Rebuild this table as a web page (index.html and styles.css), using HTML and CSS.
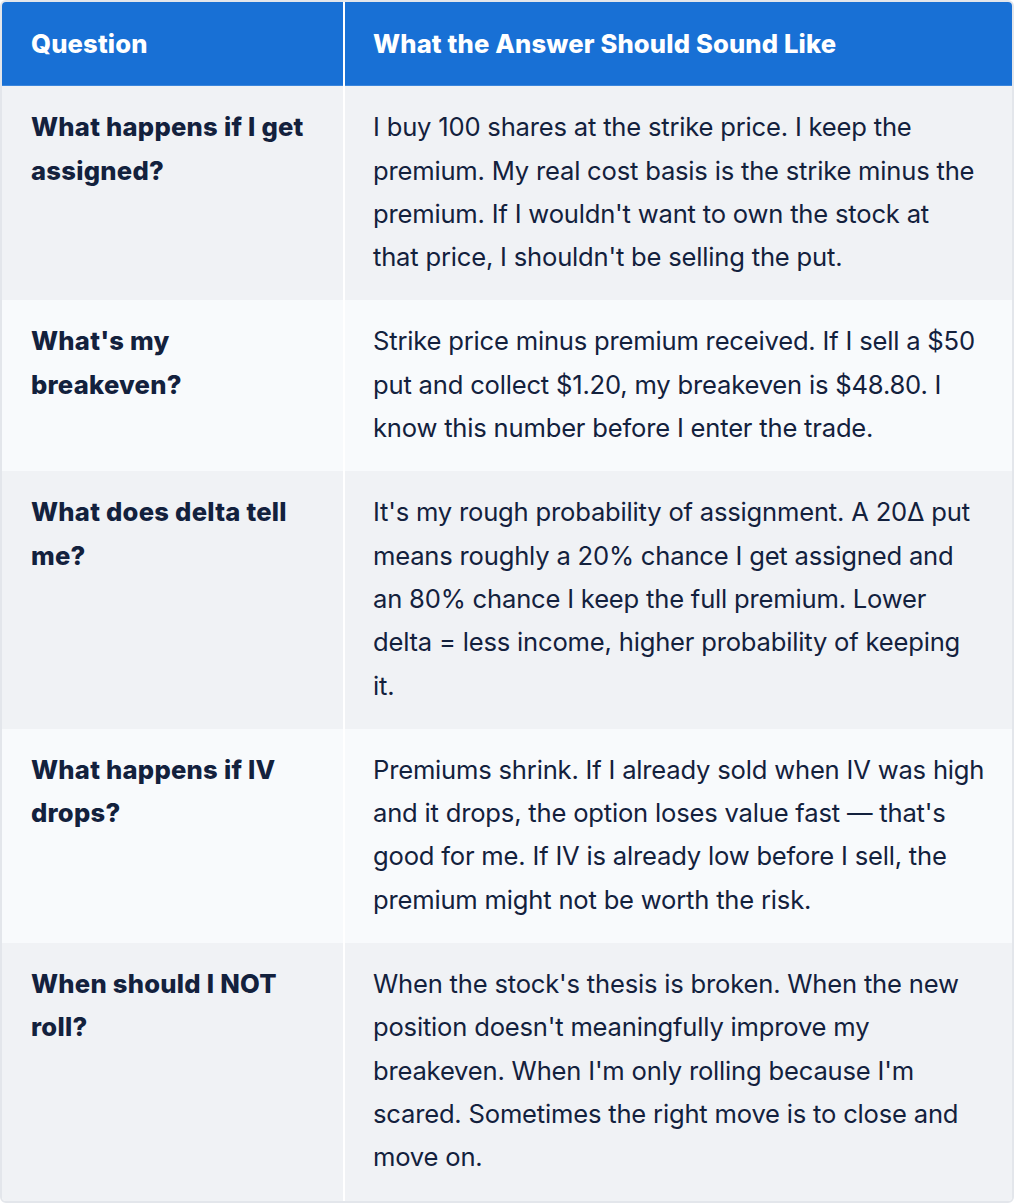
FILE: index.html
```html
<!DOCTYPE html>
<html lang="en">
<head>
<meta charset="utf-8">
<title>Options Questions</title>
<link rel="stylesheet" href="styles.css">
</head>
<body>
<div class="wrap">
  <table class="qa">
    <colgroup>
      <col class="col-q">
      <col class="col-a">
    </colgroup>
    <thead>
      <tr>
        <th>Question</th>
        <th>What the Answer Should Sound Like</th>
      </tr>
    </thead>
    <tbody>
      <tr>
        <td class="q">What happens if I get assigned?</td>
        <td>I buy 100 shares at the strike price. I keep the premium. My real cost basis is the strike minus the premium. If I wouldn't want to own the stock at <span class="nw">that price,</span> I shouldn't be selling the put.</td>
      </tr>
      <tr>
        <td class="q">What's my breakeven?</td>
        <td>Strike price minus premium received. If I sell a $50 put and collect $1.20, my breakeven is $48.80. I know this number before I enter the trade.</td>
      </tr>
      <tr>
        <td class="q">What does delta tell me?</td>
        <td>It's my rough probability of assignment. A 20Δ put means roughly a 20% chance I get assigned and an 80% chance I keep the full premium. Lower delta = less income, higher probability of keeping it.</td>
      </tr>
      <tr>
        <td class="q">What happens if IV drops?</td>
        <td>Premiums shrink. If I already sold when IV was high and it drops, the option loses value fast — that's good for me. If IV is already low before I sell, the premium might not be worth the risk.</td>
      </tr>
      <tr>
        <td class="q">When should I NOT roll?</td>
        <td>When the stock's thesis is broken. When the new position doesn't meaningfully improve my breakeven. When I'm only rolling because I'm scared. Sometimes the right move is to close and move on.</td>
      </tr>
    </tbody>
  </table>
</div>
</body>
</html>
```

FILE: styles.css
```css
html, body {
  margin: 0;
  padding: 0;
  background: #ffffff;
}

body {
  font-family: Inter, "Noto Sans", sans-serif;
  color: #13213d;
}

.wrap {
  width: 1014px;
  box-sizing: border-box;
  border: 2px solid #e3e6eb;
  border-radius: 6px;
  overflow: hidden;
}

.qa {
  width: 100%;
  border-collapse: collapse;
  table-layout: fixed;
  font-size: 25.6px;
  line-height: 43.3px;
}

.col-q { width: 342px; }

.qa th,
.qa td {
  padding: 19px 26px 22px 28px;
  text-align: left;
  vertical-align: top;
}

.qa th:first-child,
.qa td:first-child {
  padding-left: 29px;
  border-right: 2px solid #ffffff;
}

.qa th {
  background: #1870d5;
  color: #ffffff;
  font-weight: 800;
  letter-spacing: 0.15px;
  border-bottom: 1px solid #3b86dc;
  padding-top: 20px;
  padding-bottom: 20px;
}

.qa td {
  font-weight: 400;
  letter-spacing: -0.2px;
}

.qa td.q {
  font-weight: 800;
  letter-spacing: 0.25px;
}

.nw {
  white-space: nowrap;
}

.qa tbody tr:nth-child(odd) td {
  background: #f0f2f5;
}

.qa tbody tr:nth-child(even) td {
  background: #f8fafc;
}
```
